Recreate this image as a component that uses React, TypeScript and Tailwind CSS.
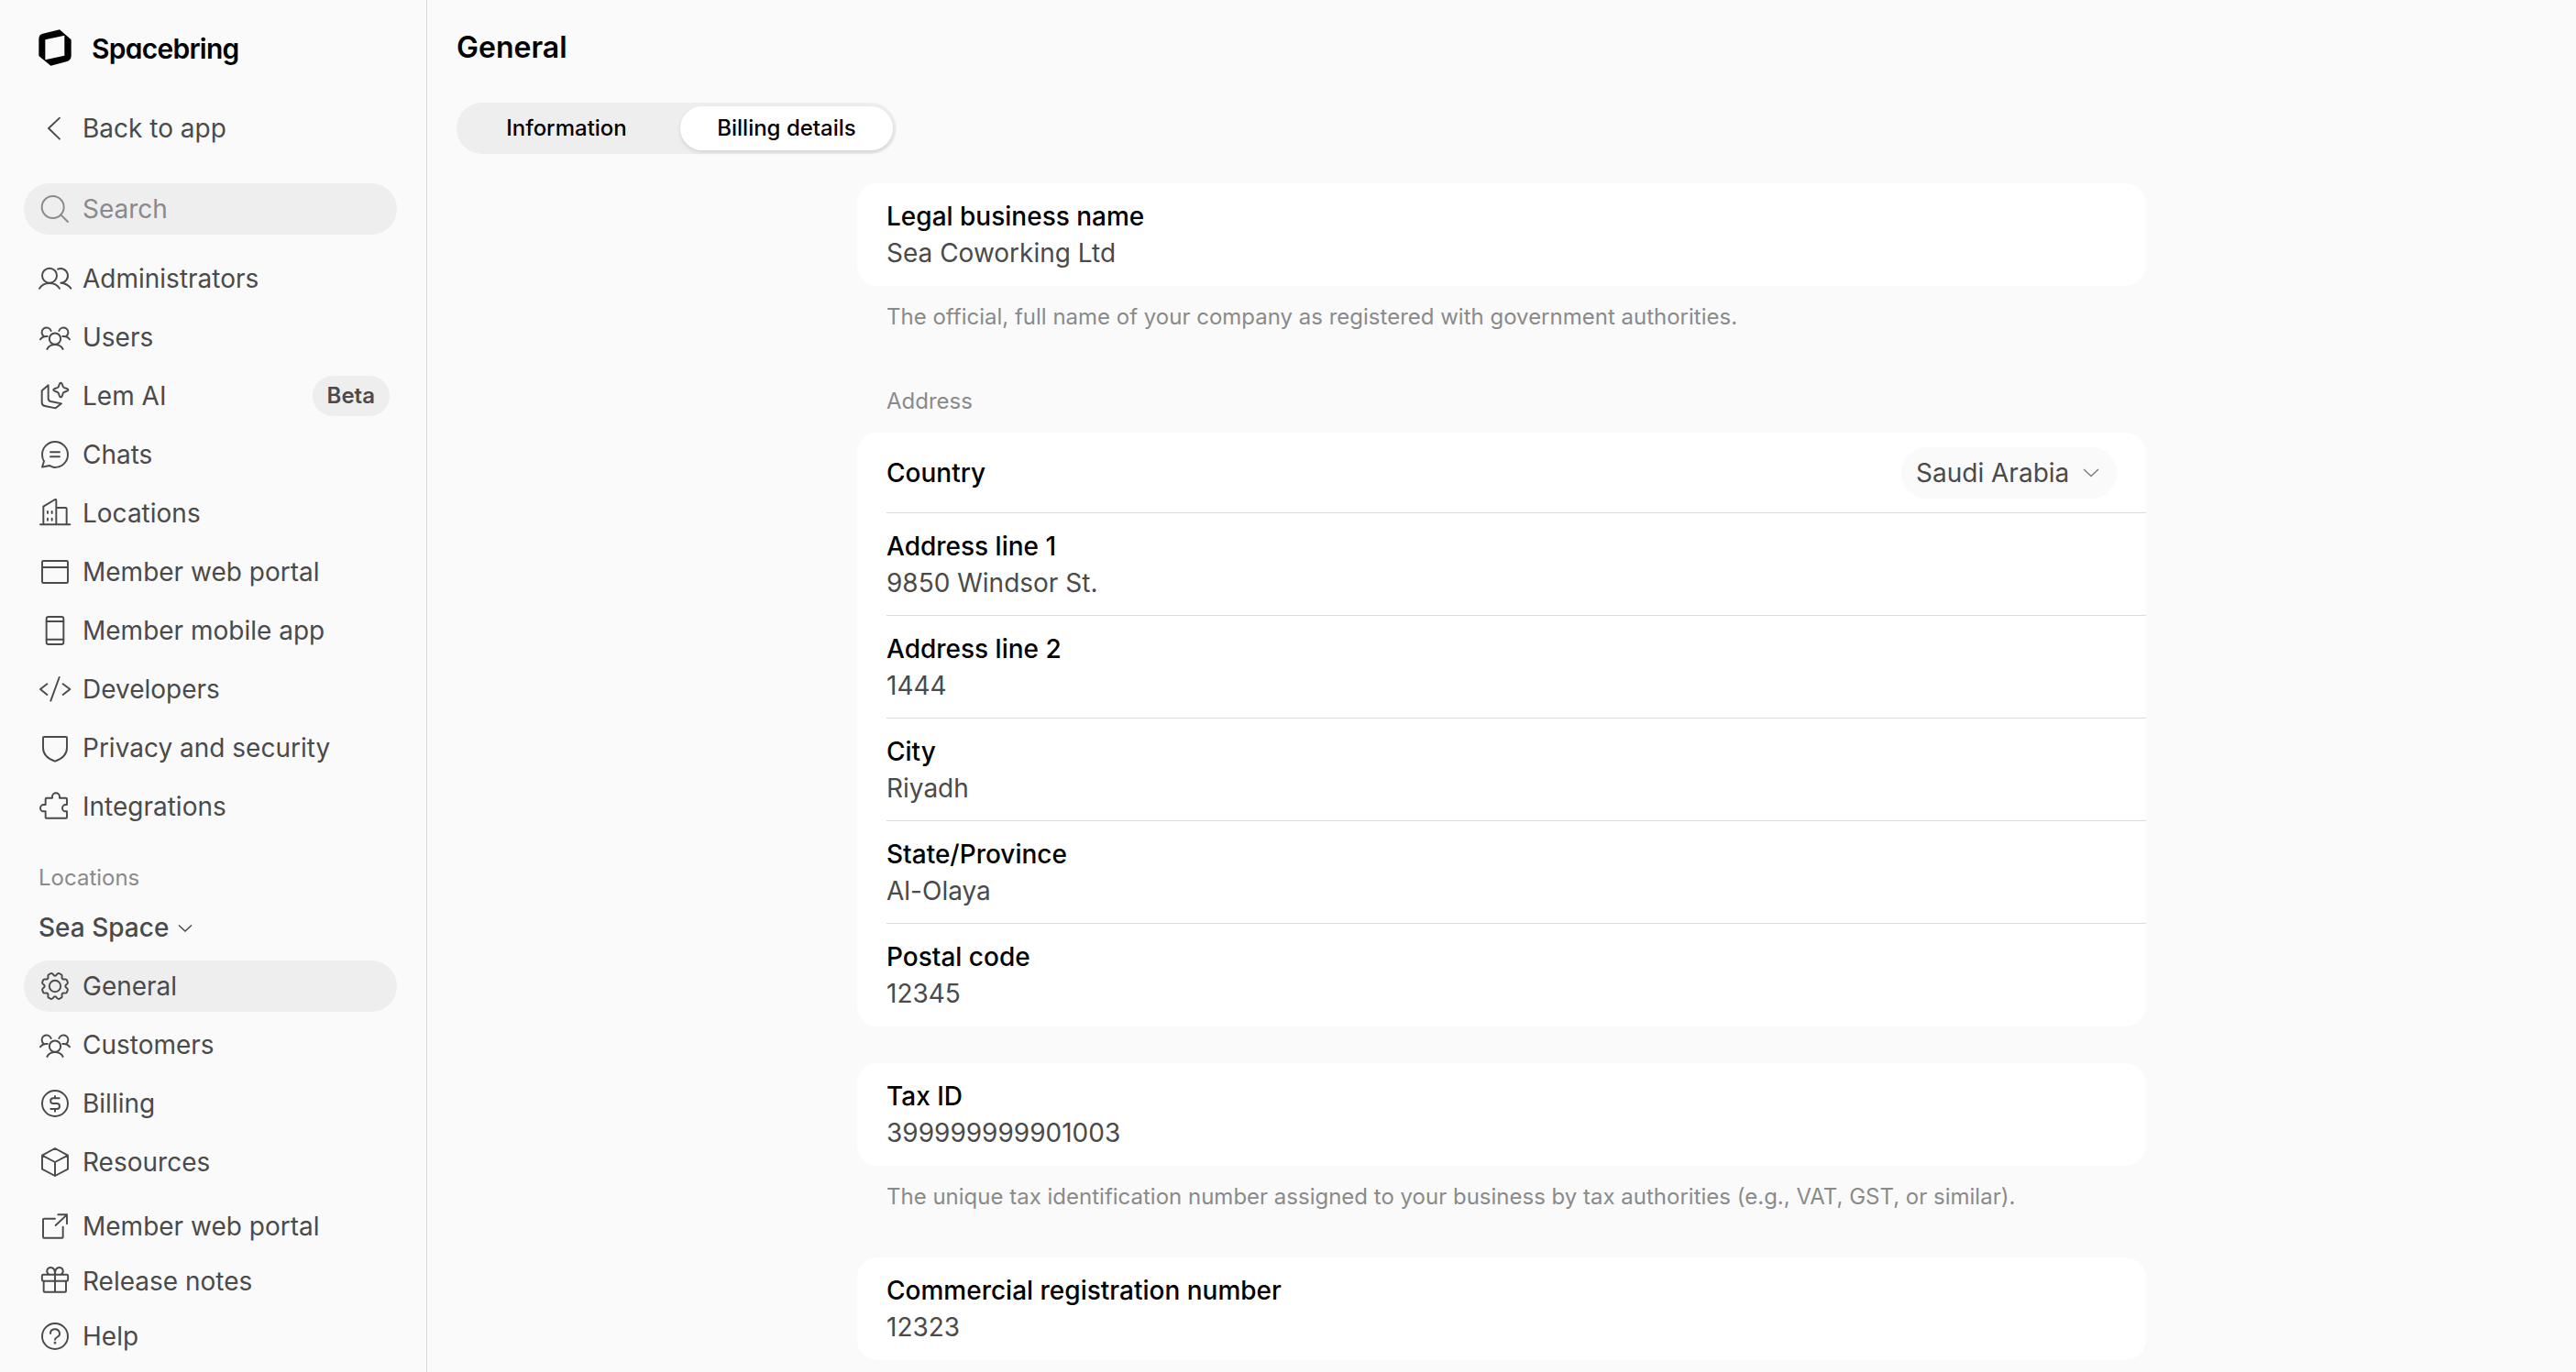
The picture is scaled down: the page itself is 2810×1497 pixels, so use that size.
import type { ReactNode } from "react"

type IconName =
  | "back"
  | "search"
  | "admins"
  | "users"
  | "lem"
  | "chats"
  | "locations"
  | "window"
  | "mobile"
  | "code"
  | "shield"
  | "puzzle"
  | "gear"
  | "billing"
  | "box"
  | "external"
  | "gift"
  | "help"

// eight rounded teeth around a 120x120 box
function gearPath() {
  const at = (deg: number, r: number) => {
    const a = ((deg - 90) * Math.PI) / 180
    return `${(60 + r * Math.cos(a)).toFixed(1)} ${(60 + r * Math.sin(a)).toFixed(1)}`
  }
  let d = `M${at(5, 35)}`
  for (let i = 0; i < 8; i++) {
    const b = i * 45
    d += `L${at(b + 11, 41)}Q${at(b + 14, 44)} ${at(b + 18, 43.5)}L${at(b + 27, 43.5)}Q${at(b + 31, 44)} ${at(b + 34, 41)}L${at(b + 40, 35)}Q${at(b + 45, 33)} ${at(b + 50, 35)}`
  }
  return d + "Z"
}

const icons: Record<IconName, ReactNode> = {
  back: <path d="M75 26L39 60L75 95" />,
  search: (
    <>
      <circle cx="53" cy="54" r="36" />
      <path d="M79 79L102 102" />
    </>
  ),
  admins: (
    <>
      <circle cx="42" cy="50" r="24" />
      <path d="M9 92C16 81 28 75 42 75S68 81 75 92" />
      <path d="M69 29A23.5 23.5 0 1 1 79 74C93 75 104 81 112 92" />
    </>
  ),
  users: (
    <>
      <circle cx="60" cy="65" r="18.5" />
      <path d="M34 99C39 89 48 84 60 84S81 89 86 99" />
      <path d="M47 39A15.5 15.5 0 1 0 24 57M35 57C25 56 17 59 12 67" />
      <path d="M73 39A15.5 15.5 0 1 1 96 57M85 57C95 56 103 59 108 67" />
    </>
  ),
  lem: (
    <>
      <path d="M38 25L17 43V80Q17 91 27 93L62 100L81 85L46 78Q38 76 38 68Z" />
      <path d="M79 17C85 17 84 29 88 32C91 35 103 34 103 40S91 45 88 49C84 52 85 64 79 64S74 52 70 49C67 45 55 46 55 40S67 35 70 32C74 29 73 17 79 17Z" />
    </>
  ),
  chats: (
    <>
      <path d="M18 60A42 42 0 1 1 60 102C54 102 47 98 42 96L18 101L24 82C20 76 18 68 18 60Z" />
      <path d="M45 52H75M45 67H75" />
    </>
  ),
  locations: (
    <>
      <path d="M12 97H109M22 97V38L60 15Q64 14 64 18V97M64 42H95Q98 42 98 45V97" />
      <path d="M36 54V60M50 54V60M36 77V83M50 77V83" />
    </>
  ),
  window: (
    <>
      <rect x="18" y="24" width="84" height="72" rx="4" />
      <path d="M18 45H102" />
    </>
  ),
  mobile: (
    <>
      <rect x="32" y="15" width="56" height="90" rx="7" />
      <path d="M32 30H88M32 89H88" />
    </>
  ),
  code: <path d="M34 43L12 60L34 78M86 43L109 60L86 78M74 21L46 98" />,
  shield: <path d="M24 24H96Q99 24 99 27V60C99 80 83 96 60 104C37 96 21 80 21 60V27Q21 24 24 24Z" />,
  puzzle: (
    <path d="M32 32H51V28A12 12 0 0 1 75 28V32H96Q99 32 99 35V54H95A11 11 0 0 0 95 76H99V95Q99 98 96 98H32Q29 98 29 95V76H23A11 11 0 0 1 23 54H29V35Q29 32 32 32Z" />
  ),
  gear: (
    <>
      <path d={gearPath()} />
      <circle cx="60" cy="60" r="18.5" />
    </>
  ),
  billing: (
    <>
      <circle cx="60" cy="60" r="42" />
      <path d="M74 43H54A8.5 8.5 0 0 0 54 60H66A9 9 0 0 1 66 78H46M60 36V43M60 78V86" />
    </>
  ),
  box: <path d="M60 15L102 38V83L60 105L18 83V38ZM18 38L60 60L102 38M60 60V105" />,
  external: (
    <path d="M60 35H24Q21 35 21 38V95Q21 98 24 98H83Q86 98 86 95V62M62 57L99 22M70 22H99V52" />
  ),
  gift: (
    <>
      <rect x="17.500" y="38" width="85" height="21" rx="4" />
      <path d="M23 59V92Q23 95 26 95H93Q96 95 96 92V59M60 38V95" />
      <path d="M60 37C60 24 55 15 46 15C33 15 30 30 39 37M60 37C60 24 65 15 74 15C87 15 90 30 81 37" />
    </>
  ),
  help: (
    <>
      <circle cx="60" cy="60" r="42" />
      <path d="M45 51A15 14 0 1 1 67 63C61 66 60 67 60 71" />
      <circle cx="60" cy="82" r="1.500" />
    </>
  ),
}

function Icon({ name }: { name: IconName }) {
  return (
    <svg
      viewBox="0 0 120 120"
      className="size-10 shrink-0"
      fill="none"
      stroke="currentColor"
      strokeWidth="5.800"
      strokeLinecap="round"
      strokeLinejoin="round"
    >
      {icons[name]}
    </svg>
  )
}

type Item = { icon: IconName; label: string; badge?: string; active?: boolean }

const mainItems: Item[] = [
  { icon: "admins", label: "Administrators" },
  { icon: "users", label: "Users" },
  { icon: "lem", label: "Lem AI", badge: "Beta" },
  { icon: "chats", label: "Chats" },
  { icon: "locations", label: "Locations" },
  { icon: "window", label: "Member web portal" },
  { icon: "mobile", label: "Member mobile app" },
  { icon: "code", label: "Developers" },
  { icon: "shield", label: "Privacy and security" },
  { icon: "puzzle", label: "Integrations" },
]

const locationItems: Item[] = [
  { icon: "gear", label: "General", active: true },
  { icon: "users", label: "Customers" },
  { icon: "billing", label: "Billing" },
  { icon: "box", label: "Resources" },
]

const footerItems: Item[] = [
  { icon: "external", label: "Member web portal" },
  { icon: "gift", label: "Release notes" },
  { icon: "help", label: "Help" },
]

function NavItem({ icon, label, badge, active }: Item) {
  return (
    <a
      className={`flex h-14 items-center gap-2.5 rounded-full pl-3.5 pr-2 ${active ? "bg-[#eeeeee]" : ""}`}
    >
      <Icon name={icon} />
      <span>{label}</span>
      {badge && (
        <span className="ml-auto flex h-11 items-center rounded-full bg-[#eeeeee] px-4 text-2xl font-semibold">
          {badge}
        </span>
      )}
    </a>
  )
}

function Logo() {
  return (
    <div className="flex h-10 items-center gap-[22px] pl-4 text-black">
      <svg viewBox="0 0 108 120" className="h-10 w-9" fill="currentColor">
        <path
          fillRule="evenodd"
          d="M69 1L107 34V88Q106 101 94 105L40 119L1 87V30Q2 17 14 14ZM22 34V100L85 86V20Z"
        />
      </svg>
      <span className="pt-0.5 text-[30px] font-semibold tracking-[-0.025em] [font-feature-settings:'cv11']">
        Spacebring
      </span>
    </div>
  )
}

function Sidebar() {
  return (
    <aside className="flex h-full w-[466px] shrink-0 flex-col border-r border-[#d9d9d9] pl-[26px] pr-8 pt-8 text-[#4a4a4a]">
      <Logo />
      <div className="mt-10">
        <NavItem icon="back" label="Back to app" />
      </div>
      <div className="mt-8 flex h-14 shrink-0 items-center gap-2.5 rounded-full bg-[#eeeeee] pl-3.5 text-[#8a8a8a]">
        <Icon name="search" />
        <span>Search</span>
      </div>
      <nav className="mt-5 flex flex-col gap-2">
        {mainItems.map((item) => (
          <NavItem key={item.label} {...item} />
        ))}
      </nav>
      <div className="mt-[34px] flex h-8 items-center pl-4 text-2xl text-[#8a8a8a]">Locations</div>
      <div className="mt-[18px] flex h-10 items-center gap-2.5 pl-4 font-medium">
        Sea Space
        <svg viewBox="0 0 16 10" className="mt-0.5 h-2.5 w-4" fill="none" stroke="currentColor" strokeWidth="1.500">
          <path d="M1 1.500L8 8L15 1.500" />
        </svg>
      </div>
      <nav className="mt-4 flex flex-col gap-2">
        {locationItems.map((item) => (
          <NavItem key={item.label} {...item} />
        ))}
      </nav>
      <nav className="mt-3.5 flex flex-col gap-1">
        {footerItems.map((item) => (
          <NavItem key={item.label} {...item} />
        ))}
      </nav>
    </aside>
  )
}

function Field({ label, value, divider }: { label: string; value: string; divider?: boolean }) {
  return (
    <div className={`flex h-28 flex-col pt-4 ${divider ? "border-b border-[#dcdcdc]" : ""}`}>
      <div className="h-10 font-medium leading-10 text-black">{label}</div>
      <div className="h-10 leading-10">{value}</div>
    </div>
  )
}

function Card({ children }: { children: ReactNode }) {
  return <div className="rounded-[22px] bg-white pl-8">{children}</div>
}

function Hint({ children }: { children: ReactNode }) {
  return <p className="pl-8 text-2xl leading-8 text-[#8a8a8a]">{children}</p>
}

const addressFields = [
  { label: "Address line 1", value: "9850 Windsor St." },
  { label: "Address line 2", value: "1444" },
  { label: "City", value: "Riyadh" },
  { label: "State/Province", value: "Al-Olaya" },
  { label: "Postal code", value: "12345" },
]

function BillingDetails() {
  return (
    <div className="mx-auto mt-8 w-[1406px]">
      <Card>
        <Field label="Legal business name" value="Sea Coworking Ltd" />
      </Card>
      <div className="mt-[18px]">
        <Hint>The official, full name of your company as registered with government authorities.</Hint>
      </div>

      <div className="mt-[60px]">
        <Hint>Address</Hint>
      </div>
      <div className="mt-[18px]">
        <Card>
          <div className="flex h-22 items-center justify-between border-b border-[#dcdcdc] pr-8">
            <span className="font-medium text-black">Country</span>
            <button className="flex h-14 w-[235px] items-center justify-between rounded-full bg-[#fafafa] pl-4 pr-[19px]">
              Saudi Arabia
              <svg viewBox="0 0 18 10" className="h-2.5 w-[18px]" fill="none" stroke="#808080" strokeWidth="1.500">
                <path d="M1 1L9 8.500L17 1" />
              </svg>
            </button>
          </div>
          {addressFields.map((field, i) => (
            <Field key={field.label} {...field} divider={i < addressFields.length - 1} />
          ))}
        </Card>
      </div>

      <div className="mt-10">
        <Card>
          <Field label="Tax ID" value="399999999901003" />
        </Card>
      </div>
      <div className="mt-[18px]">
        <Hint>
          The unique tax identification number assigned to your business by tax authorities (e.g., VAT, GST, or
          similar).
        </Hint>
      </div>

      <div className="mt-[50px]">
        <Card>
          <Field label="Commercial registration number" value="12323" />
        </Card>
      </div>
    </div>
  )
}

export default function App() {
  return (
    <div className="flex h-screen overflow-hidden bg-[#fafafa] font-['Inter',sans-serif] text-[28px] leading-10 text-[#4a4a4a]">
      <Sidebar />
      <main className="flex-1 pt-8">
        <h1 className="pl-8 text-[32px] font-semibold leading-10 text-black">General</h1>
        <div className="ml-8 mt-10 flex h-14 w-[480px] gap-2 rounded-full bg-[#eeeeee] p-1 text-2xl font-medium text-black">
          <button className="flex-1 rounded-full">Information</button>
          <button className="flex-1 rounded-full bg-white shadow-[0_2px_4px_rgba(0,0,0,0.12)]">
            Billing details
          </button>
        </div>
        <BillingDetails />
      </main>
    </div>
  )
}
